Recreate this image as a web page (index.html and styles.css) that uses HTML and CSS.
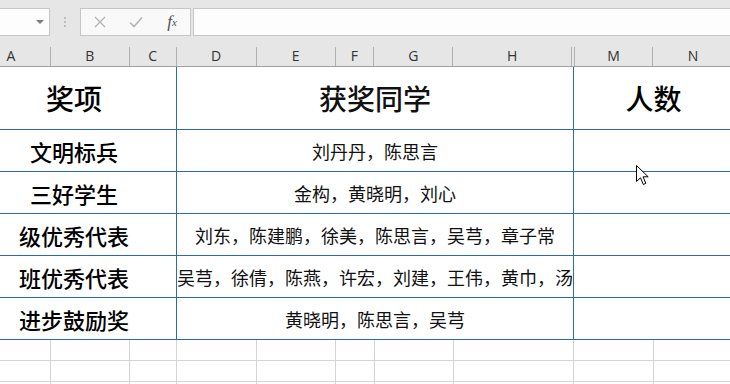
FILE: index.html
```html
<!DOCTYPE html>
<html lang="zh-CN">
<head>
    <meta charset="UTF-8">
    <title>获奖名单</title>
    <link rel="stylesheet" href="styles.css">
</head>
<body>

    <!-- name box + formula bar -->
    <div class="toolbar">
        <div class="namebox"><span class="caret"></span></div>
        <div class="grip"><i></i><i></i><i></i></div>
        <div class="fbuttons">
            <span class="fbtn">
                <svg width="12" height="12" viewBox="0 0 12 12"><path d="M1 1L11 11M11 1L1 11" stroke="#b4b4b4" stroke-width="1.3" fill="none"/></svg>
            </span>
            <span class="fbtn">
                <svg width="14" height="12" viewBox="0 0 14 12"><path d="M1 6.5L5 10.5L13 1.5" stroke="#b4b4b4" stroke-width="1.6" fill="none"/></svg>
            </span>
            <span class="fbtn fx">f<sub>x</sub></span>
        </div>
        <div class="formula"></div>
    </div>

    <div class="sheet">
        <div class="colheads">
            <div class="ch w-a">A</div>
            <div class="ch w-b">B</div>
            <div class="ch w-c">C</div>
            <div class="ch w-d">D</div>
            <div class="ch w-e">E</div>
            <div class="ch w-f">F</div>
            <div class="ch w-g">G</div>
            <div class="ch w-h">H</div>
            <div class="ch w-hid"></div>
            <div class="ch w-m">M</div>
            <div class="ch w-n">N</div>
        </div>

        <div class="grid">
            <div class="cell award title">奖项</div>
            <div class="cell names title">获奖同学</div>
            <div class="cell count title">人数</div>

            <div class="cell award">文明标兵</div>
            <div class="cell names">刘丹丹，陈思言</div>
            <div class="cell count"></div>

            <div class="cell award">三好学生</div>
            <div class="cell names">金构，黄晓明，刘心</div>
            <div class="cell count"></div>

            <div class="cell award">级优秀代表</div>
            <div class="cell names">刘东，陈建鹏，徐美，陈思言，吴芎，章子常</div>
            <div class="cell count"></div>

            <div class="cell award">班优秀代表</div>
            <div class="cell names long">吴芎，徐倩，陈燕，许宏，刘建，王伟，黄巾，汤</div>
            <div class="cell count"></div>

            <div class="cell award">进步鼓励奖</div>
            <div class="cell names">黄晓明，陈思言，吴芎</div>
            <div class="cell count"></div>

            <!-- empty rows under the table -->
            <div class="blank"></div><div class="blank"></div><div class="blank"></div><div class="blank"></div><div class="blank"></div>
            <div class="blank"></div><div class="blank"></div><div class="blank"></div><div class="blank"></div><div class="blank"></div>
            <div class="blank"></div><div class="blank"></div><div class="blank"></div><div class="blank"></div><div class="blank"></div>
            <div class="blank"></div><div class="blank"></div><div class="blank"></div><div class="blank"></div><div class="blank"></div>
            <div class="blank"></div><div class="blank"></div><div class="blank"></div><div class="blank"></div><div class="blank"></div>
            <div class="blank"></div><div class="blank"></div><div class="blank"></div><div class="blank"></div><div class="blank"></div>
        </div>

        <svg class="pointer" width="14" height="21" viewBox="0 0 14 21">
            <path d="M0.5 0.5L0.5 16.5L4.5 12.8L7.3 19.5L9.8 18.4L7.1 11.8L12.2 11.8Z" fill="#fff" stroke="#000" stroke-width="1" stroke-linejoin="round"/>
        </svg>
    </div>

</body>
</html>
```

FILE: styles.css
```css
body {
    margin: 0;
    width: 730px;
    height: 384px;
    overflow: hidden;
    background-color: #fff;
    font-family: "Noto Sans CJK SC", "Noto Sans", sans-serif;
}

/* ---------- formula bar ---------- */
.toolbar {
    display: flex;
    align-items: flex-start;
    height: 44px;
    padding-top: 8px;
    box-sizing: border-box;
    background-color: #e6e6e6;
}

.namebox {
    position: relative;
    width: 60px;
    height: 28px;
    margin-left: -10px;
    box-sizing: border-box;
    border: 1px solid #c6c6c6;
    background-color: #fdfdfd;
}

.caret {
    position: absolute;
    left: 45px;
    top: 11px;
    border-left: 4px solid transparent;
    border-right: 4px solid transparent;
    border-top: 4px solid #7d7d7d;
}

.grip {
    display: flex;
    flex-direction: column;
    gap: 2px;
    margin: 9px 0 0 14px;
}

.grip i {
    display: block;
    width: 2px;
    height: 2px;
    background-color: #bdbdbd;
}

.fbuttons {
    display: flex;
    align-items: center;
    width: 111px;
    height: 28px;
    margin-left: 14px;
    padding-left: 1px;
    box-sizing: border-box;
    border: 1px solid #c6c6c6;
    background-color: #f9f9f9;
}

.fbtn {
    display: flex;
    justify-content: center;
    align-items: center;
    width: 36px;
}

.fx {
    font-family: "Liberation Serif", serif;
    font-style: italic;
    font-size: 17px;
    line-height: 20px;
    color: #505050;
}

.fx sub {
    font-size: 11px;
    vertical-align: 0;
}

.formula {
    flex: 1;
    height: 28px;
    margin: 0 -10px 0 2px;
    box-sizing: border-box;
    border: 1px solid #c6c6c6;
    background-color: #fdfdfd;
}

/* ---------- sheet ---------- */
.sheet {
    position: relative;
    margin-left: -28px;
    width: 761px;
}

.colheads {
    display: flex;
    align-items: flex-end;
    height: 23px;
    box-sizing: border-box;
    border-bottom: 1px solid #a0a0a0;
    background-color: #e6e6e6;
}

.ch {
    height: 19px;
    box-sizing: border-box;
    border-right: 1px solid #b0b0b0;
    font-family: "Open Sans", "Noto Sans", sans-serif;
    font-size: 14px;
    line-height: 17px;
    text-align: center;
    color: #333;
}

.w-a { width: 79px; }
.w-b { width: 79px; }
.w-c { width: 47px; }
.w-d { width: 80px; }
.w-e { width: 79px; }
.w-f { width: 39px; }
.w-g { width: 79px; }
.w-h { width: 119px; }
.w-hid { width: 3px; }
.w-m { width: 78px; }
.w-n { width: 80px; border-right: none; }

.grid {
    display: grid;
    grid-template-columns: 79px 79px 47px 80px 79px 39px 79px 120px 80px 80px;
    grid-template-rows: 63px repeat(5, 42px) repeat(3, 21px);
}

.cell {
    display: flex;
    justify-content: center;
    align-items: center;
    overflow: hidden;
    white-space: nowrap;
    box-sizing: border-box;
    border-right: 1px solid #2a6bb1;
    border-bottom: 1px solid #2a6bb1;
    color: #000;
}

.award {
    grid-column: 1 / 4;
    font-size: 22px;
    font-weight: 500;
}

.names {
    grid-column: 4 / 9;
    font-size: 18px;
    color: #111;
}

.long {
    justify-content: flex-start;
}

.count {
    grid-column: 9 / 11;
}

.title {
    font-size: 28px;
    font-weight: 500;
}

.blank {
    box-sizing: border-box;
    border-right: 1px solid #d4d4d4;
    border-bottom: 1px solid #d4d4d4;
}

.pointer {
    position: absolute;
    left: 664px;
    top: 121px;
}
```
